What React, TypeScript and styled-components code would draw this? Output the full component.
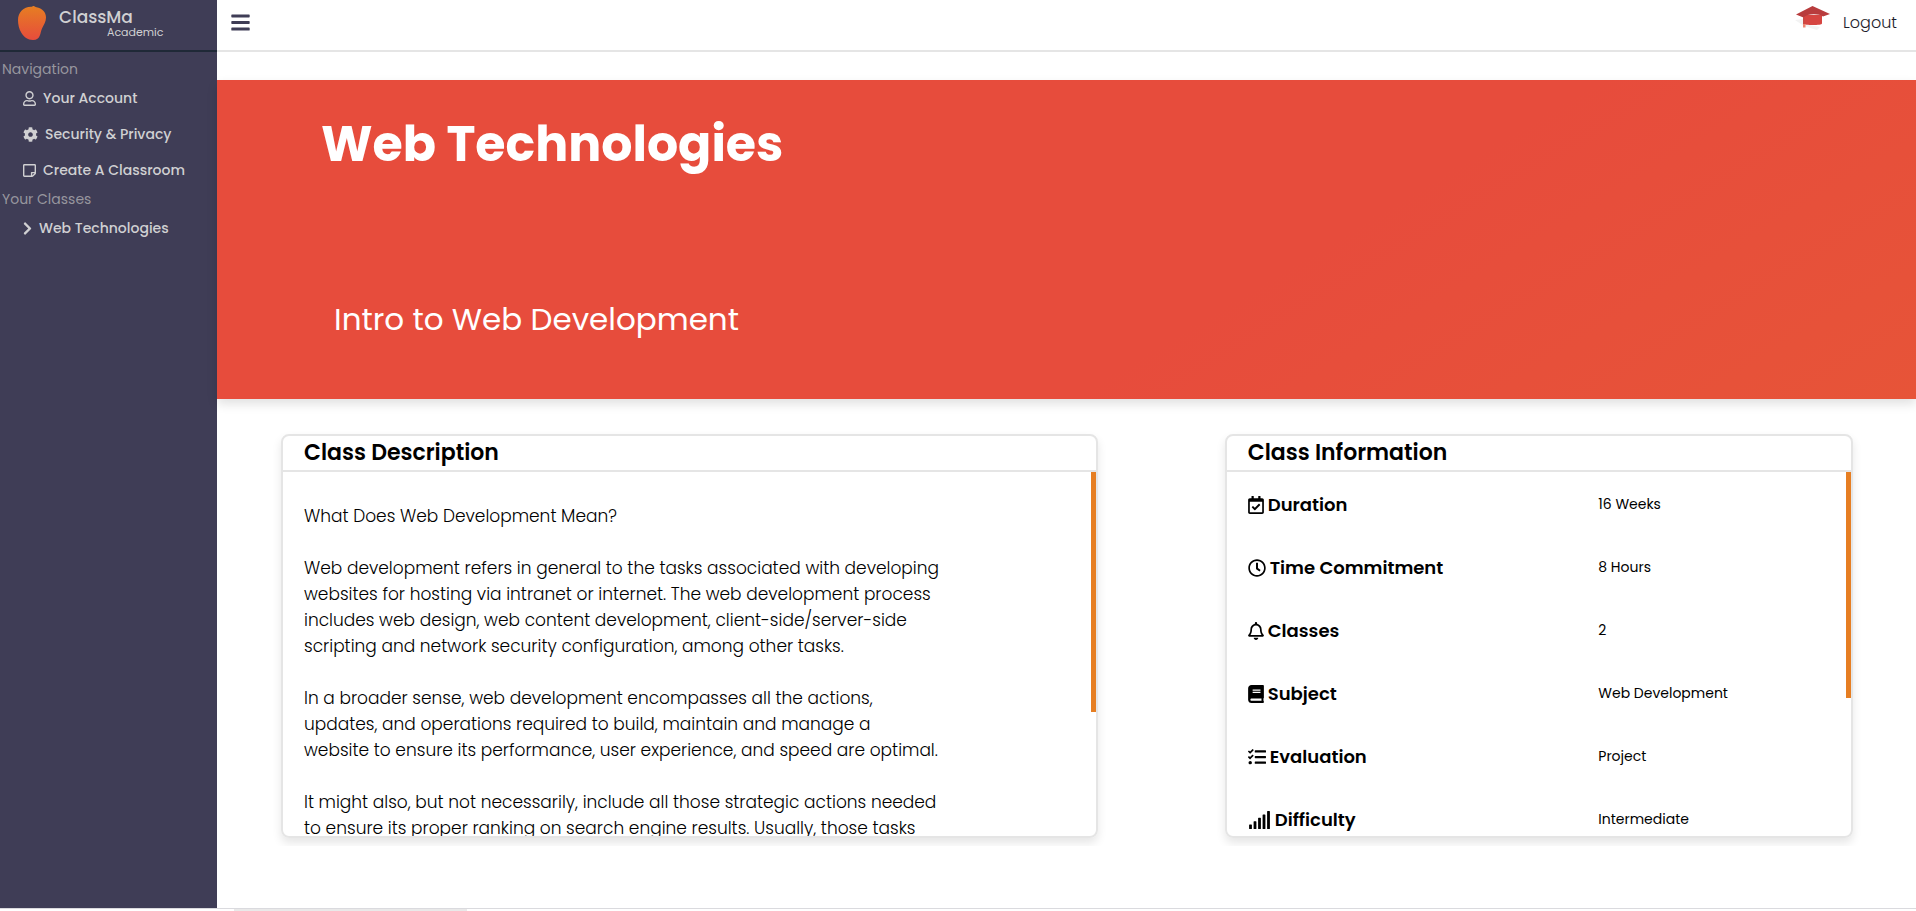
import React from "react";
import styled, { createGlobalStyle } from "styled-components";
import {
  FaBars,
  FaBook,
  FaChevronRight,
  FaCog,
  FaRegBell,
  FaRegCalendarCheck,
  FaRegClock,
  FaRegStickyNote,
  FaRegUser,
  FaSignal,
  FaTasks,
} from "react-icons/fa";

const navy = "#3f3d56";
const line = "#e5e5e5";
const red = "#e74c3c";
const orange = "#e67e22";

const GlobalStyle = createGlobalStyle`
  *, *::before, *::after { box-sizing: border-box; }
  body {
    margin: 0;
    background: #fff;
    color: #000;
    font-family: Poppins, Inter, sans-serif;
  }
  h1, h2, p, ul { margin: 0; padding: 0; }
`;

const Page = styled.div`
  display: flex;
  flex-direction: column;
  min-height: 100vh;
`;

const Shell = styled.div`
  display: flex;
  flex: 1;
`;

const Sidebar = styled.aside`
  flex: 0 0 217px;
  background: ${navy};
  color: #d0d0d2;
`;

const Brand = styled.div`
  display: flex;
  gap: 13px;
  height: 52px;
  padding: 6px 18px;
  border-bottom: 2px solid #1f2937;
`;

const BrandText = styled.div`
  display: flex;
  flex-direction: column;
`;

const BrandName = styled.span`
  font-size: 17px;
  line-height: 22px;
  font-weight: 500;
`;

const BrandTag = styled.span`
  padding-left: 48px;
  font-size: 11px;
  line-height: 8px;
`;

const Nav = styled.nav`
  padding-top: 6px;
`;

const NavLabel = styled.h2`
  padding-left: 2px;
  color: #97969e;
  font-size: 14px;
  line-height: 22px;
  font-weight: 400;
`;

const NavList = styled.ul`
  list-style: none;
`;

const NavLink = styled.a<{ $icon: number }>`
  display: flex;
  align-items: center;
  gap: 7px;
  height: 36px;
  padding-left: 23px;
  color: inherit;
  font-size: 14px;
  font-weight: 500;
  text-decoration: none;
  white-space: nowrap;

  svg {
    width: ${(p) => p.$icon}px;
    height: 15px;
  }
`;

const Main = styled.main`
  flex: 1;
  min-width: 0;
`;

const TopBar = styled.header`
  display: flex;
  align-items: center;
  justify-content: space-between;
  height: 52px;
  padding: 3px 19px 8px 14px;
  border-bottom: 2px solid ${line};
`;

const MenuButton = styled.button`
  display: flex;
  padding: 0;
  border: 0;
  background: none;
  color: ${navy};

  svg {
    width: 19px;
    height: 21px;
  }
`;

const Account = styled.div`
  display: flex;
  align-items: flex-start;
  gap: 12px;
`;

const LogoutLink = styled.a`
  color: #1d1c2c;
  font-size: 16px;
  line-height: 38px;
  font-weight: 300;
  text-decoration: none;
`;

const Banner = styled.section`
  display: flex;
  flex-direction: column;
  gap: 109px;
  margin-top: 28px;
  height: 319px;
  padding: 28px 104px;
  background: linear-gradient(149deg, ${red} 62%, #e75438 100%);
  box-shadow: 0 5px 10px rgba(0, 0, 0, 0.12);
  color: #fff;
`;

const Title = styled.h1`
  font-size: 49px;
  line-height: 72px;
  font-weight: 700;
`;

const Subtitle = styled.p`
  padding-left: 13px;
  font-size: 31px;
  line-height: 60px;
`;

const Cards = styled.div`
  display: grid;
  grid-template-columns: 13fr 10fr;
  gap: 127px;
  padding: 35px 63px 8px 64px;
  overflow: hidden;
`;

const Card = styled.section`
  min-width: 0;
  border: 2px solid ${line};
  border-radius: 8px;
  box-shadow: 0 5px 10px rgba(0, 0, 0, 0.1);
  overflow: hidden;
`;

const CardTitle = styled.h2`
  padding-left: 21px;
  border-bottom: 2px solid ${line};
  font-size: 22px;
  line-height: 34px;
  font-weight: 600;
`;

const CardBody = styled.div`
  display: flex;
  height: 40vh;
`;

const ScrollArea = styled.div`
  flex: 1;
  min-width: 0;
  overflow-y: auto;
  scrollbar-width: none;
`;

const ScrollThumb = styled.div<{ $size: number }>`
  flex: 0 0 5px;
  height: ${(p) => p.$size}%;
  background: ${orange};
`;

const Prose = styled.div`
  display: flex;
  flex-direction: column;
  gap: 26px;
  max-width: 660px;
  padding: 31px 0 0 21px;
  font-size: 17px;
  line-height: 26px;
  font-weight: 300;
`;

const InfoTable = styled.table`
  width: 100%;
  margin-top: 1px;
  border-collapse: collapse;
  table-layout: fixed;
`;

const InfoName = styled.th`
  width: 60%;
  height: 63px;
  padding: 0 0 0 21px;
  font-size: 18px;
  font-weight: 600;
  text-align: left;
`;

const InfoLabel = styled.span<{ $icon: number }>`
  display: flex;
  align-items: center;
  gap: 4px;

  svg {
    width: ${(p) => p.$icon}px;
    height: 18px;
  }
`;

const InfoValue = styled.td`
  padding: 0;
  font-size: 14px;
`;

const Footer = styled.footer`
  height: 3px;
  padding-left: 234px;
  border-top: 1px solid #dadade;
`;

const FooterMark = styled.div`
  width: 233px;
  height: 2px;
  background: #e9e9e9;
`;

const Logo = () => (
  <svg width="28" height="34" viewBox="0 0 28 34" aria-hidden="true">
    <defs>
      <linearGradient id="logo-fill" x1="0" y1="0" x2="0" y2="1">
        <stop offset="0" stopColor={orange} />
        <stop offset="1" stopColor={red} />
      </linearGradient>
    </defs>
    <path
      d="M15.600 0C16.600 0 17 1 18.500 1.200C24 2 28 6 28 11.500C28 15.500 25.800 19 24 22.500C22 26.500 23 34 15 34C9.500 34 6 31 3.500 27C1 23 0 18.500 0 14C0 6.500 5.500 1 13 .8C14.200 .8 14.600 0 15.600 0Z"
      fill="url(#logo-fill)"
    />
  </svg>
);

const GradCap = () => (
  <svg width="36" height="26" viewBox="0 0 36 26" aria-hidden="true">
    <path d="M0 16L8 15L9 20L25 23L22 26L9 22Z" fill="#f3f3f3" />
    <path d="M8.500 11L27 11L27 19.500C27 21.500 9 21.500 8.500 19.500Z" fill="#d64541" />
    <path d="M1 10.500L17.500 2L35 10L28 12.500C24 9.500 12 9.500 8.500 13.500Z" fill="#b83c3d" />
    <path d="M8 12.500L9.500 13.500L9.500 21L8 21Z" fill="#c94a45" />
    <path d="M8 20H10.500V23.500H8Z" fill="#ee8672" />
  </svg>
);

const navigation = [
  { icon: FaRegUser, iconWidth: 13, text: "Your Account" },
  { icon: FaCog, iconWidth: 15, text: "Security & Privacy" },
  { icon: FaRegStickyNote, iconWidth: 13, text: "Create A Classroom" },
];

const classes = [{ icon: FaChevronRight, iconWidth: 9, text: "Web Technologies" }];

const description = [
  "What Does Web Development Mean?",
  "Web development refers in general to the tasks associated with developing websites for hosting via intranet or internet. The web development process includes web design, web content development, client-side/server-side scripting and network security configuration, among other tasks.",
  "In a broader sense, web development encompasses all the actions, updates, and operations required to build, maintain and manage a website\u00a0to ensure its performance, user experience, and speed are optimal.",
  "It might also, but not necessarily, include all those strategic actions needed to ensure its proper ranking on search engine results. Usually, those tasks",
];

const information = [
  { icon: FaRegCalendarCheck, iconWidth: 16, name: "Duration", value: "16 Weeks" },
  { icon: FaRegClock, iconWidth: 18, name: "Time Commitment", value: "8 Hours" },
  { icon: FaRegBell, iconWidth: 16, name: "Classes", value: "2" },
  { icon: FaBook, iconWidth: 16, name: "Subject", value: "Web Development" },
  { icon: FaTasks, iconWidth: 18, name: "Evaluation", value: "Project" },
  { icon: FaSignal, iconWidth: 23, name: "Difficulty", value: "Intermediate" },
];

const NavItems = ({ items }: { items: typeof navigation }) => (
  <NavList>
    {items.map(({ icon: Icon, iconWidth, text }) => (
      <li key={text}>
        <NavLink href="#" $icon={iconWidth}>
          <Icon aria-hidden />
          {text}
        </NavLink>
      </li>
    ))}
  </NavList>
);

export default function App() {
  return (
    <Page>
      <GlobalStyle />
      <Shell>
        <Sidebar>
          <Brand>
            <Logo />
            <BrandText>
              <BrandName>ClassMa</BrandName>
              <BrandTag>Academic</BrandTag>
            </BrandText>
          </Brand>
          <Nav>
            <NavLabel>Navigation</NavLabel>
            <NavItems items={navigation} />
            <NavLabel>Your Classes</NavLabel>
            <NavItems items={classes} />
          </Nav>
        </Sidebar>
        <Main>
          <TopBar>
            <MenuButton type="button" aria-label="Toggle menu">
              <FaBars />
            </MenuButton>
            <Account>
              <GradCap />
              <LogoutLink href="#">Logout</LogoutLink>
            </Account>
          </TopBar>
          <Banner>
            <Title>Web Technologies</Title>
            <Subtitle>Intro to Web Development</Subtitle>
          </Banner>
          <Cards>
            <Card>
              <CardTitle>Class Description</CardTitle>
              <CardBody>
                <ScrollArea>
                  <Prose>
                    {description.map((text) => (
                      <p key={text}>{text}</p>
                    ))}
                  </Prose>
                </ScrollArea>
                <ScrollThumb $size={66} />
              </CardBody>
            </Card>
            <Card>
              <CardTitle>Class Information</CardTitle>
              <CardBody>
                <ScrollArea>
                  <InfoTable>
                    <tbody>
                      {information.map(({ icon: Icon, iconWidth, name, value }) => (
                        <tr key={name}>
                          <InfoName scope="row">
                            <InfoLabel $icon={iconWidth}>
                              <Icon aria-hidden />
                              {name}
                            </InfoLabel>
                          </InfoName>
                          <InfoValue>{value}</InfoValue>
                        </tr>
                      ))}
                    </tbody>
                  </InfoTable>
                </ScrollArea>
                <ScrollThumb $size={62} />
              </CardBody>
            </Card>
          </Cards>
        </Main>
      </Shell>
      <Footer>
        <FooterMark />
      </Footer>
    </Page>
  );
}
